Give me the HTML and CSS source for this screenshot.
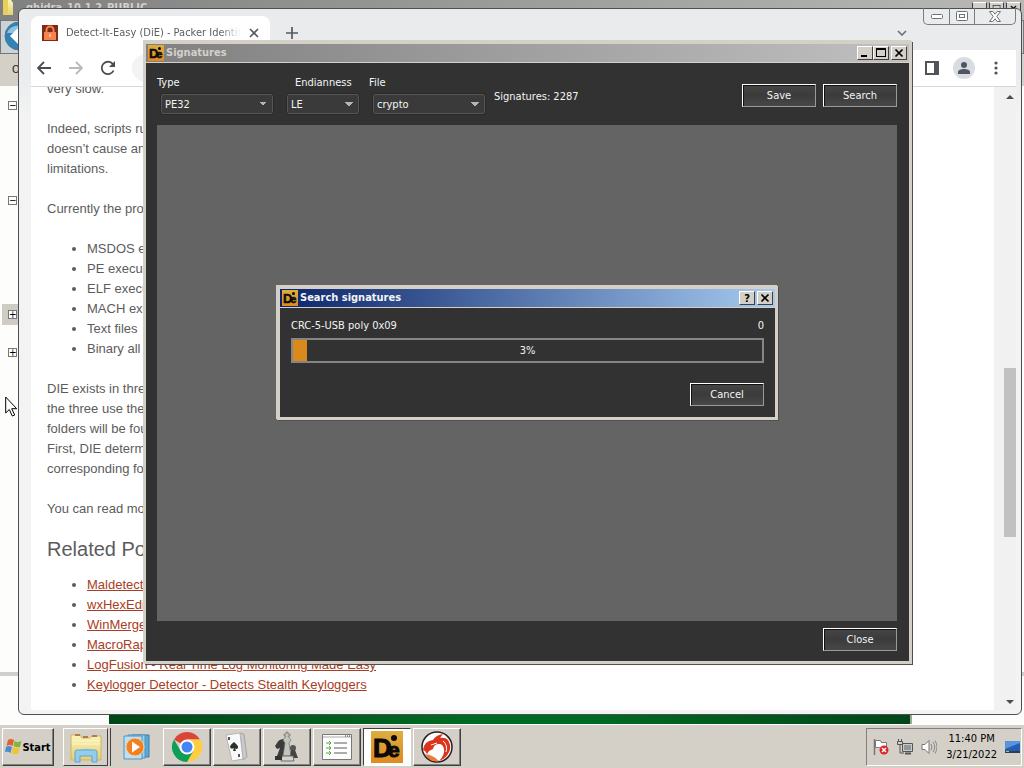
FILE: index.html
```
<!DOCTYPE html>
<html lang="en">

<head>
   <meta charset="UTF-8">
   <meta name="viewport" content="width=device-width, initial-scale=1.0">
   <title>Signatures</title>
   <link rel="stylesheet" href="styles.css">
</head>

<body>
   <!-- shared icons -->
   <svg class="sprite" aria-hidden="true">
      <defs>
         <linearGradient id="orange" x1="0" y1="0" x2="0" y2="1">
            <stop offset="0" stop-color="#dcae3e"/>
            <stop offset="1" stop-color="#e08a22"/>
         </linearGradient>
         <linearGradient id="folder" x1="0" y1="0" x2="0" y2="1">
            <stop offset="0" stop-color="#fbf3b8"/>
            <stop offset="1" stop-color="#e5cf74"/>
         </linearGradient>
      </defs>
      <symbol id="die" viewBox="0 0 32 32">
         <rect width="32" height="32" fill="url(#orange)"/>
         <text x="2" y="26" font-family="Liberation Sans" font-weight="bold" font-size="26" fill="#0b0a08" stroke="#0b0a08" stroke-width="1">D</text>
         <text x="17" y="26" font-family="Liberation Sans" font-weight="bold" font-size="21" fill="#0b0a08" stroke="#0b0a08" stroke-width="1">e</text>
         <circle cx="23" cy="7" r="3" fill="#0b0a08"/>
      </symbol>
      <symbol id="close" viewBox="0 0 10 10">
         <path d="M1.500 1.500 8.500 8.500M8.500 1.500 1.500 8.500" stroke="#000" stroke-width="1.700"/>
      </symbol>
   </svg>

   <main class="workspace">
      <!-- explorer window in the back -->
      <section class="explorer">
         <header class="explorer-title flex">
            <svg width="16" height="16" viewBox="0 0 16 16"><path d="M3 0h8l2 3v12H3z" fill="url(#folder)"/><path d="M3 0h5v13l-5 2z" fill="#e8cf5a"/></svg>
            <span>ghidra_10.1.2_PUBLIC</span>
            <div class="explorer-caption flex">
               <i>_</i><i>□</i><i>×</i>
            </div>
         </header>
         <div class="explorer-nav">
            <svg width="36" height="32" viewBox="0 0 36 32"><circle cx="18" cy="15" r="14" fill="#2f83b5" stroke="#5e7586"/><path d="M6 12a13 12 0 0 1 24 0z" fill="#8ec3df"/><path d="M9 15l8-8v5h10v6H17v5z" fill="#fff"/></svg>
         </div>
         <div class="explorer-bar">Organize</div>
         <div class="explorer-tree">
            <span class="node first">−</span>
            <span class="node second">−</span>
            <span class="node third">+</span>
            <span class="node fourth">+</span>
         </div>
         <div class="explorer-status"></div>
         <div class="wallpaper"></div>
      </section>

      <!-- browser -->
      <section class="browser flex column">
         <div class="tabs flex">
            <div class="tab flex align-center">
               <svg width="16" height="16" viewBox="0 0 16 16"><rect width="16" height="16" fill="#7e2b16"/><path d="M2 7h12v8H2z" fill="#f58250"/><path d="M4.500 7V5a3.500 3.500 0 0 1 7 0v2" fill="none" stroke="#f58250" stroke-width="2"/><path d="M7 9h2v3H7z" fill="#ffc49e"/></svg>
               <span class="tab-title">Detect-It-Easy (DiE) - Packer Identifier</span>
               <button class="plain" aria-label="Close tab"><svg width="10" height="10" viewBox="0 0 10 10"><path d="M1 1l8 8M9 1L1 9" stroke="#555a5f" stroke-width="1.600"/></svg></button>
            </div>
            <button class="plain newtab" aria-label="New tab"><svg width="12" height="12" viewBox="0 0 12 12"><path d="M6 0v12M0 6h12" stroke="#555a5f" stroke-width="1.700"/></svg></button>
            <div class="browser-caption flex">
               <button class="plain" aria-label="Minimize"><svg width="12" height="5" viewBox="0 0 12 5"><rect x=".5" y=".5" width="11" height="4" rx="1" fill="#fff" stroke="#6b7076"/></svg></button>
               <button class="plain" aria-label="Maximize"><svg width="12" height="10" viewBox="0 0 12 10"><rect x=".5" y=".5" width="11" height="9" rx="1" fill="#fff" stroke="#6b7076"/><rect x="3.500" y="3.500" width="5" height="3" fill="#fff" stroke="#6b7076"/></svg></button>
               <button class="plain wide" aria-label="Close"><svg width="12" height="11" viewBox="0 0 12 11"><path d="M.5.500h3.300L6 3.200 8.200.500h3.300L7.800 5.500l3.700 5H8.200L6 7.800l-2.200 2.700H.5l3.700-5z" fill="#fff" stroke="#6b7076"/></svg></button>
            </div>
            <button class="plain chevron" aria-label="Search tabs"><svg width="10" height="6" viewBox="0 0 10 6"><path d="M1 1l4 4 4-4" fill="none" stroke="#6b6f74" stroke-width="1.600"/></svg></button>
         </div>
         <div class="toolbar flex align-center">
            <button class="plain" aria-label="Back"><svg width="16" height="16" viewBox="0 0 16 16"><path d="M15 8H2M8 2L2 8l6 6" fill="none" stroke="#4a4e53" stroke-width="1.800"/></svg></button>
            <button class="plain" aria-label="Forward"><svg width="16" height="16" viewBox="0 0 16 16"><path d="M1 8h13M8 2l6 6-6 6" fill="none" stroke="#b8bbbe" stroke-width="1.800"/></svg></button>
            <button class="plain" aria-label="Reload"><svg width="16" height="16" viewBox="0 0 16 16"><path d="M13.600 10.500A6.200 6.200 0 1 1 12.500 3.700L14 5.500" fill="none" stroke="#4a4e53" stroke-width="1.800"/><path d="M15 1v6H9z" fill="#4a4e53"/></svg></button>
            <div class="address"></div>
            <button class="plain" aria-label="Side panel"><svg width="14" height="14" viewBox="0 0 14 14"><rect x="1" y="1" width="12" height="12" fill="#fff" stroke="#4f545b" stroke-width="2"/><path d="M9 0h5v14H9z" fill="#4f545b"/></svg></button>
            <button class="plain profile" aria-label="Profile"><svg width="12" height="12" viewBox="0 0 12 12"><circle cx="6" cy="3" r="3" fill="#4f5661"/><path d="M0 12v-2c0-2 3-3 6-3s6 1 6 3v2z" fill="#4f5661"/></svg></button>
            <button class="plain" aria-label="Menu"><svg width="4" height="14" viewBox="0 0 4 14"><g fill="#4f545b"><circle cx="2" cy="2" r="1.600"/><circle cx="2" cy="7" r="1.600"/><circle cx="2" cy="12" r="1.600"/></g></svg></button>
         </div>
         <div class="page flex">
            <article class="article">
               <p>very slow.</p>
               <p>Indeed, scripts run fast and this<br>doesn’t cause any significant<br>limitations.</p>
               <p>Currently the program detects:</p>
               <ul>
                  <li>MSDOS executable files</li>
                  <li>PE executable files</li>
                  <li>ELF executable files</li>
                  <li>MACH executable files</li>
                  <li>Text files</li>
                  <li>Binary all other files</li>
               </ul>
               <p>DIE exists in three versions. All<br>the three use the same<br>folders will be found.<br>First, DIE determines the<br>corresponding folder.</p>
               <p>You can read more here.</p>
               <h2>Related Posts</h2>
               <ul>
                  <li><a href="#">Maldetect</a></li>
                  <li><a href="#">wxHexEditor</a></li>
                  <li><a href="#">WinMerge</a></li>
                  <li><a href="#">MacroRapid</a></li>
                  <li><a href="#">LogFusion - Real Time Log Monitoring Made Easy</a></li>
                  <li><a href="#">Keylogger Detector - Detects Stealth Keyloggers</a></li>
               </ul>
            </article>
            <div class="scrollbar flex column align-center">
               <svg width="8" height="4" viewBox="0 0 8 4"><path d="M0 4l4-4 4 4z" fill="#4d4d4d"/></svg>
               <div class="track"><div class="thumb"></div></div>
               <svg width="8" height="4" viewBox="0 0 8 4"><path d="M0 0l4 4 4-4z" fill="#4d4d4d"/></svg>
            </div>
         </div>
      </section>

      <!-- signatures window -->
      <section class="window signatures flex column">
         <header class="titlebar inactive flex align-center">
            <svg width="16" height="16"><use href="#die"/></svg>
            <h1>Signatures</h1>
            <button class="caption" aria-label="Minimize"><svg width="10" height="10" viewBox="0 0 10 10"><path d="M1 7h6v2H1z"/></svg></button>
            <button class="caption" aria-label="Maximize"><svg width="10" height="10" viewBox="0 0 10 10"><path d="M0 0h10v9H0zM1 2v6h8V2z" fill-rule="evenodd"/></svg></button>
            <button class="caption last" aria-label="Close"><svg width="10" height="10"><use href="#close"/></svg></button>
         </header>
         <div class="signatures-body flex column">
            <form class="filters flex">
               <div class="field type">
                  <label for="type">Type</label>
                  <select id="type"><option>PE32</option></select>
               </div>
               <div class="field endian">
                  <label for="endian">Endianness</label>
                  <select id="endian"><option>LE</option></select>
               </div>
               <div class="field file">
                  <label for="file">File</label>
                  <select id="file"><option>crypto</option></select>
               </div>
               <p class="count">Signatures: 2287</p>
               <button type="button" class="btn">Save</button>
               <button type="button" class="btn">Search</button>
            </form>
            <div class="results"></div>
            <div class="footer flex justif-end">
               <button type="button" class="btn">Close</button>
            </div>
         </div>
      </section>

      <!-- progress dialog -->
      <section class="window dialog">
         <header class="titlebar flex align-center">
            <svg width="16" height="16"><use href="#die"/></svg>
            <h1>Search signatures</h1>
            <button class="caption" aria-label="Help">?</button>
            <button class="caption last" aria-label="Close"><svg width="10" height="10"><use href="#close"/></svg></button>
         </header>
         <div class="dialog-body">
            <div class="flex justif-between">
               <label for="search-progress">CRC-5-USB poly 0x09</label>
               <span>0</span>
            </div>
            <div class="progress">
               <progress id="search-progress" value="3" max="100"></progress>
               <span>3%</span>
            </div>
            <div class="flex justif-end">
               <button type="button" class="btn">Cancel</button>
            </div>
         </div>
      </section>

      <svg class="pointer" width="13" height="21" viewBox="0 0 13 21"><path d="M.700 1v16l3.600-3.500 3 6.500 2.400-1-3-6.300h5z" fill="#fff" stroke="#000"/></svg>
   </main>

   <footer class="taskbar flex">
      <button class="task start flex align-center">
         <svg width="17" height="16" viewBox="0 0 17 16"><path d="M3 1q3-2 6 0L7.500 7q-3-2-6 0z" fill="#e5602b"/><path d="M9.500 2q3 2 7 0L15 8q-3 1-6.500-1z" fill="#83b73c"/><path d="M1 8q3-2 6 0l-1.500 6q-2-2-5.500-1z" fill="#4a8bd4"/><path d="M8 8q3 2 6.500 1L13 15q-3 1-6.500-1z" fill="#f3c32e"/></svg>
         <span>Start</span>
      </button>
      <button class="task stacked" aria-label="Windows Explorer">
         <svg width="34" height="32" viewBox="0 0 34 32"><path d="M2 4h9l2 3h8l2-2h9v24H2z" fill="url(#folder)" stroke="#cdb565"/><path d="M6 3h5v2H6zM14 5h5v2h-5zM23 4h5v2h-5z" fill="#b77b4b"/><path d="M3 10h28M3 13h28" stroke="#fff8cd"/><path d="M8 20q9-5 18 0v2H8z" fill="#9dd4ee"/><path d="M6 31V21q0-2 2-2h18q2 0 2 2v10h-5v-6H11v6z" fill="#94cdec" stroke="#5fa5cc"/></svg>
      </button>
      <button class="task bare" aria-label="Media Player">
         <svg width="28" height="28" viewBox="0 0 28 28"><path d="M9 2h17v22H9z" fill="#5da9d6" stroke="#3a7dab"/><path d="M5 2h17v23H5z" fill="#9bd1ee" stroke="#4d93bf"/><path d="M1 3h18v23H1z" fill="#b9e0f4" stroke="#4d93bf"/><circle cx="12" cy="14" r="9" fill="#f08020" stroke="#fbd0a0"/><path d="M9 8.500l8 5.500-8 5.500z" fill="#fff"/></svg>
      </button>
      <button class="task" aria-label="Chrome">
         <svg width="32" height="32" viewBox="0 0 32 32"><path d="M16 16L3 8.500A15 15 0 0 1 29 8.500H16z" fill="#db4437"/><path d="M16 16l13-7.500A15 15 0 0 1 16 31l6.500-11.500z" fill="#ffcd40"/><path d="M3 8.500A15 15 0 0 0 16 31l6.500-11.300L16 16l-6.500 3.500z" fill="#0f9d58"/><path d="M16 8.500h13a15 15 0 0 1 0 15L22 16z" fill="#ffcd40"/><circle cx="16" cy="16" r="7.500" fill="#fff"/><circle cx="16" cy="16" r="5.500" fill="#4285f4"/></svg>
      </button>
      <button class="task" aria-label="Solitaire">
         <svg width="28" height="32" viewBox="0 0 28 32"><path d="M17 2l4 1 3 23-4 3z" fill="#c9c9c9" stroke="#a5a5a5"/><path d="M3 4l14-2 3 26-11 2z" fill="#fafafa" stroke="#b5b5b5"/><path d="M11 11q5 4 4 6-2 2-3 0l1 3h-3l1-3q-3 2-4-1 0-2 4-5z" fill="#26352b"/><path d="M5 6h2v3H5zM15 23h2v3h-2z" fill="#555"/></svg>
      </button>
      <button class="task" aria-label="Chess">
         <svg width="28" height="32" viewBox="0 0 28 32"><path d="M4 12q2-4 7-4 3 3 3 8l-2 9H4l3-8-3 1-2-3z" fill="#3b3c3c"/><path d="M13 1h2v2h2v2h-2l3 4-2 3 2 13h-8l2-13-2-3 3-4V5h-2V3h2z" fill="#c4c4be" stroke="#70706c" stroke-width=".7"/><circle cx="20" cy="17" r="3" fill="#555"/><path d="M18 19h4l3 8h-8z" fill="#444"/><path d="M9 25h11l1 5H8z" fill="#d4d4cc" stroke="#6d6d68"/><path d="M2 25h7v4H2z" fill="#333"/></svg>
      </button>
      <button class="task" aria-label="Task list">
         <svg width="30" height="26" viewBox="0 0 30 26"><path d="M.500.500h29v25H.5z" fill="#fdfdfd" stroke="#777"/><path d="M1 3h28" stroke="#aaa"/><path d="M23 2h1M25 2h1M27 2h1" stroke="#333"/><path d="M12 9h13M12 14h13M12 19h13" stroke="#5a5a5a"/><path d="M4 9h5M7 7l2 2-2 2M4 14h5M7 12l2 2-2 2M4 19h5M7 17l2 2-2 2" fill="none" stroke="#5aa83a"/></svg>
      </button>
      <button class="task active" aria-label="Detect It Easy">
         <svg width="32" height="32"><use href="#die"/></svg>
      </button>
      <button class="task" aria-label="Ghidra">
         <svg width="32" height="32" viewBox="0 0 32 32"><circle cx="16" cy="16" r="15" fill="#fff" stroke="#2a2020" stroke-width="1.500"/><path d="M2 19Q3 10 12 9q3-5 10-6l-3 4q7-1 9 4 3 6-1 12-3 5-9 7 6-6 5-12-1-5-5-5-5 0-6 5l-4 2-2 3-2-3z" fill="#dc331c"/><path d="M10 14l6-2M22 10q5 4 3 11" fill="none" stroke="#fff"/><path d="M4 23q8 1 14 7-9 2-14-7z" fill="#f27a36"/></svg>
      </button>
      <div class="tray flex align-center">
         <svg width="16" height="16" viewBox="0 0 16 16"><path d="M1.500 0v16" stroke="#777" stroke-width="1.500"/><path d="M2.500 1.500h5l1 2h5v6h-6l-1-1h-4z" fill="#fff" stroke="#777"/><circle cx="11" cy="11" r="4.500" fill="#d8262b"/><path d="M9 9l4 4M13 9l-4 4" stroke="#fff" stroke-width="1.500"/></svg>
         <svg width="16" height="16" viewBox="0 0 16 16"><path d="M5.500 4.500h10v8h-10z" fill="#c7cbcc" stroke="#555"/><path d="M7 6h7v5H7z" fill="#929898"/><path d="M8 14.500h6" stroke="#555" stroke-width="2"/><path d="M1.500 0v3M4.500 0v3M.500 2.500h5v3h-5zM3 6v8h4" fill="none" stroke="#555"/></svg>
         <svg width="16" height="16" viewBox="0 0 16 16"><path d="M1 5.500h3l4-4v13l-4-4H1z" fill="#fff" stroke="#777"/><path d="M10 5q2 3 0 6M12 3q3.500 5 0 10M14 1.500q4 6.500 0 13" fill="none" stroke="#888"/></svg>
         <time class="clock">11:40 PM<br>3/21/2022</time>
         <svg width="15" height="13" viewBox="0 0 15 13"><path d="M0 0h15v10H0z" fill="#245db5"/><path d="M0 0h15v2L0 8z" fill="#5794dc"/><path d="M0 10h15v2H0z" fill="#303c50"/><path d="M1 10h3v1H1z" fill="#9fd06a"/></svg>
      </div>
   </footer>
</body>

</html>
```
FILE: styles.css
```
/** Common */
* {
   padding: 0;
   margin: 0;
   box-sizing: border-box;
}
body {
   display: flex;
   flex-direction: column;
   height: 100vh;
   overflow: hidden;
   font-family: "DejaVu Sans Condensed", "DejaVu Sans", sans-serif;
   font-size: 11px;
   line-height: 16px;
   background-color: #d4d0c8;
}
button, select {
   font-family: inherit;
   font-size: inherit;
}
svg { display: block; flex: none;}
.sprite { position: absolute; width: 0; height: 0;}

.flex { display: flex;}
.column { flex-direction: column;}
.align-center { align-items: center;}
.justif-between { justify-content: space-between;}
.justif-end { justify-content: flex-end;}

.plain {
   display: flex;
   align-items: center;
   justify-content: center;
   border: none;
   background: none;
}

.workspace {
   position: relative;
   flex: 1;
   min-height: 0;
}

/** Explorer, behind everything */
.explorer {
   display: flex;
   flex-direction: column;
   height: 100%;
   background-color: #fdfdfc;
}
.explorer-title {
   height: 20px;
   overflow: hidden;
   line-height: 16px;
   font-weight: bold;
   color: #d4d0c8;
   background: linear-gradient(90deg, #808080, #b8b8b6);
}
.explorer-title span { margin-left: 10px;}
.explorer-caption {
   gap: 2px;
   margin-left: auto;
   padding: 2px 3px;
}
.explorer-caption i {
   width: 15px;
   height: 14px;
   font-style: normal;
   text-align: center;
   line-height: 12px;
   color: #000;
   background-color: #d4d0c8;
   border: 1px solid #404040;
   border-top-color: #fff;
}
.explorer-nav {
   height: 34px;
   background-color: #c9d3d8;
   border: 1px solid #777;
}
.explorer-bar {
   height: 32px;
   padding-left: 12px;
   line-height: 32px;
   color: #222;
   background-color: #d4d0c8;
}
.explorer-tree {
   display: flex;
   flex-direction: column;
   flex: 1;
   align-items: flex-start;
   padding: 15px 0 0 8px;
   border-bottom: 4px solid #cfcfcf;
}
.node {
   width: 9px;
   height: 9px;
   font-size: 10px;
   line-height: 7px;
   text-align: center;
   color: #000;
   background-color: #fff;
   border: 1px solid #777;
}
.second { margin-top: 86px;}
.third {
   margin-top: 105px;
   box-shadow: 0 0 0 6px #cfccc4;
}
.fourth { margin-top: 29px;}
.explorer-status { height: 38px;}
.wallpaper {
   height: 10px;
   margin: 0 112px 0 109px;
   background: linear-gradient(90deg, #004718, #006b22 45%, #006b22 60%, #004718);
   border-right: 2px solid #a5a5a0;
}

/** Browser */
.browser {
   position: absolute;
   top: 8px;
   right: 2px;
   bottom: 9px;
   left: 18px;
   padding: 0 5px 4px 12px;
   border: 1px solid #4b4f54;
   border-radius: 6px;
   background: linear-gradient(#e9ebed 0, #e9ebed 60px, #f3f3f3 110px);
}
.tabs {
   height: 41px;
   padding-top: 7px;
}
.tab {
   width: 239px;
   height: 34px;
   padding: 0 11px;
   gap: 8px;
   border-radius: 8px 8px 0 0;
   background-color: #fff;
}
.tab-title {
   flex: 1;
   overflow: hidden;
   white-space: nowrap;
   color: #5a5f64;
   -webkit-mask-image: linear-gradient(90deg, #000 88%, transparent);
   mask-image: linear-gradient(90deg, #000 88%, transparent);
}
.newtab {
   width: 44px;
   height: 34px;
}
.browser-caption {
   order: 2;
   height: 17px;
   margin-top: -8px;
   border: 1px solid #777c82;
   border-top: none;
   border-radius: 0 0 5px 5px;
}
.browser-caption button { width: 25px;}
.browser-caption button + button { border-left: 1px solid #777c82;}
.browser-caption .wide { width: 41px;}
.chevron {
   width: 20px;
   height: 34px;
   margin: 0 11px 0 auto;
}
.toolbar {
   flex: none;
   height: 37px;
   padding: 0 18px 0 5px;
   gap: 16px;
   background-color: #fff;
   border-bottom: 1px solid #d5d7d9;
}
.address {
   flex: 1;
   height: 28px;
   border-radius: 14px;
   margin-right: 20px;
   background-color: #f1f3f4;
}
.profile {
   width: 22px;
   height: 22px;
   margin: 0 3px 0 -2px;
   border-radius: 50%;
   background-color: #dadce3;
}
.page {
   flex: 1;
   min-height: 0;
   overflow: hidden;
   background-color: #fff;
}
.article {
   flex: 1;
   margin-top: -8px;
   padding-left: 16px;
   font-family: "Liberation Sans", Arial, sans-serif;
   font-size: 13px;
   line-height: 20px;
   color: #5c5c5c;
}
.article p, .article ul { margin-bottom: 20px;}
.article ul { padding-left: 40px;}
.article h2 {
   margin-bottom: 16px;
   font-size: 20px;
   font-weight: normal;
}
.article a { color: #a93c24;}
.scrollbar {
   width: 22px;
   padding: 8px 0 6px 10px;
   background-color: #f1f1f1;
}
.track {
   flex: 1;
   display: flex;
   flex-direction: column;
   justify-content: center;
   width: 12px;
   padding-top: 106px;
}
.thumb {
   height: 34%;
   background-color: #c1c1c1;
}

/** Windows */
.window {
   position: absolute;
   color: #f4f4f4;
   background-color: #323232;
   border: 3px solid #d4d0c8;
   box-shadow: 1px 1px #505050, -1px -1px #d4d0c8;
}
.titlebar {
   flex: none;
   height: 19px;
   padding: 0 2px;
   background: linear-gradient(90deg, #0a246a, #a6caf0);
   border-bottom: 1px solid #d4d0c8;
}
.inactive {
   color: #d4d0c8;
   background: linear-gradient(90deg, #808080, #c0c0c0);
}
.titlebar h1 {
   flex: 1;
   padding-left: 2px;
   font-size: 11px;
}
.caption {
   display: flex;
   align-items: center;
   justify-content: center;
   width: 16px;
   height: 14px;
   font-weight: bold;
   color: #000;
   background-color: #d4d0c8;
   border: 1px solid;
   border-color: #fff #404040 #404040 #fff;
}
.caption.last { margin-left: 2px;}
.btn {
   width: 74px;
   height: 23px;
   color: #f4f4f4;
   background: linear-gradient(#454545, #3b3b3b 50%, #484848);
   border: 1px solid;
   border-color: #fff #999 #999 #fff;
   box-shadow: inset 1px 1px #111;
}

.signatures {
   top: 41px;
   right: 112px;
   bottom: 60px;
   left: 144px;
   border-left-width: 2px;
}
.signatures-body {
   flex: 1;
   padding: 11px 12px 10px 11px;
}
.filters { height: 51px;}
.field label {
   display: block;
   height: 20px;
   line-height: 18px;
}
.field select {
   display: block;
   width: 100%;
   height: 20px;
   padding-left: 3px;
   color: #f4f4f4;
   appearance: none;
   border: 1px solid #565656;
   border-radius: 2px;
   background-color: #3a3a3a;
   background-image: linear-gradient(45deg, transparent 50%, #b5b5b5 50%), linear-gradient(-45deg, transparent 50%, #b5b5b5 50%);
   background-position: right 9px top 7px, right 5px top 7px;
   background-size: 4px 4px;
   background-repeat: no-repeat;
   outline: 1px solid #292929;
}
.type { width: 116px; padding-left: 4px;}
.type label { margin-left: -4px;}
.endian { width: 72px; margin-left: 14px;}
.endian label { margin-left: 8px;}
.file { width: 112px; margin-left: 14px;}
.file label { margin-left: -4px;}
.count {
   flex: 1;
   padding: 15px 0 0 9px;
}
.filters .btn { margin: 10px 0 0 7px;}
.results {
   flex: 1;
   background-color: #646464;
}
.footer { padding-top: 7px;}

.dialog {
   top: 286px;
   right: 246px;
   left: 277px;
}
.dialog-body { padding: 10px 11px 11px;}
.progress {
   display: grid;
   align-items: center;
   margin: 4px 0 20px;
}
.progress progress, .progress span { grid-area: 1 / 1;}
.progress span { text-align: center;}
progress {
   width: 100%;
   height: 25px;
   appearance: none;
   border: 2px solid #858585;
   background-color: #323232;
}
progress::-webkit-progress-bar { background-color: #323232;}
progress::-webkit-progress-value { background-color: #d98a1c;}

.pointer {
   position: absolute;
   top: 396px;
   left: 5px;
}

/** Taskbar */
.taskbar {
   height: 44px;
   padding: 3px 2px 2px 2px;
   gap: 2px;
   border-top: 1px solid #fff;
   background-color: #d4d0c8;
}
.task {
   display: flex;
   align-items: center;
   justify-content: center;
   width: 48px;
   background-color: #d4d0c8;
   border: 1px solid;
   border-color: #fff #404040 #404040 #fff;
   box-shadow: inset -1px -1px #808080;
}
.start {
   gap: 0;
   width: 52px;
   margin-right: 7px;
   font-weight: bold;
}
.stacked {
   width: 45px;
   margin-right: 3px;
   box-shadow: 2px 0 #d4d0c8, 3px 0 #404040;
}
.bare {
   border-color: transparent;
   box-shadow: none;
}
.active {
   background-color: #fff;
   border-color: #404040 #fff #fff #404040;
   box-shadow: none;
}
.tray {
   gap: 8px;
   margin-left: auto;
   padding: 0 1px 0 6px;
   border: 1px solid;
   border-color: #808080 #fff #fff #808080;
}
.clock {
   padding-left: 1px;
   text-align: center;
}
```
